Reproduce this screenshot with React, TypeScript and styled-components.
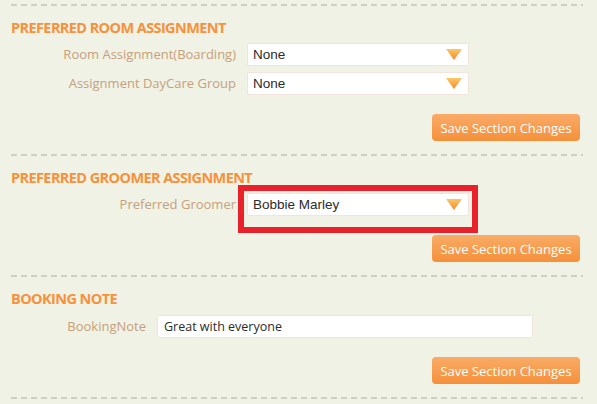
import React from "react";
import styled, { createGlobalStyle } from "styled-components";

const GlobalStyle = createGlobalStyle`
  html, body {
    margin: 0;
    padding: 0;
    background: #eff2e5;
  }
  body {
    font-family: "Open Sans", "Liberation Sans", sans-serif;
  }
`;

interface IRow {
  label: string;
  value: string;
  kind: "select" | "text";
  highlight?: boolean;
}

interface ISection {
  title: string;
  labelWidth: number;
  fieldWidth: number;
  rows: IRow[];
}

const sections: ISection[] = [
  {
    title: "PREFERRED ROOM ASSIGNMENT",
    labelWidth: 225,
    fieldWidth: 222,
    rows: [
      { label: "Room Assignment(Boarding)", value: "None", kind: "select" },
      { label: "Assignment DayCare Group", value: "None", kind: "select" },
    ],
  },
  {
    title: "PREFERRED GROOMER ASSIGNMENT",
    labelWidth: 225,
    fieldWidth: 222,
    rows: [
      {
        label: "Preferred Groomer",
        value: "Bobbie Marley",
        kind: "select",
        highlight: true,
      },
    ],
  },
  {
    title: "BOOKING NOTE",
    labelWidth: 135,
    fieldWidth: 376,
    rows: [{ label: "BookingNote", value: "Great with everyone", kind: "text" }],
  },
];

function Arrow() {
  return (
    <svg width="16" height="11" viewBox="0 0 16 11">
      <defs>
        <linearGradient id="arrowFill" x1="0" y1="0" x2="0" y2="1">
          <stop offset="0" stopColor="#fdc766" />
          <stop offset="1" stopColor="#f48a2c" />
        </linearGradient>
      </defs>
      <polygon points="0,0 16,0 8,11" fill="url(#arrowFill)" />
    </svg>
  );
}

export default function App() {
  return (
    <>
      <GlobalStyle />
      <Page>
        <Divider />
        {sections.map((section) => (
          <React.Fragment key={section.title}>
            <Section>
              <Title>{section.title}</Title>
              <Rows>
                {section.rows.map((row) => (
                  <Row
                    key={row.label}
                    $labelWidth={section.labelWidth}
                    $fieldWidth={section.fieldWidth}
                  >
                    <Label>{row.label}</Label>
                    <FieldWrap>
                      {row.kind === "select" ? (
                        <SelectBox>
                          <span>{row.value}</span>
                          <Arrow />
                        </SelectBox>
                      ) : (
                        <TextInput defaultValue={row.value} />
                      )}
                      {row.highlight && <Highlight />}
                    </FieldWrap>
                  </Row>
                ))}
              </Rows>
              <ButtonBar>
                <SaveButton>Save Section Changes</SaveButton>
              </ButtonBar>
            </Section>
            <Divider />
          </React.Fragment>
        ))}
      </Page>
    </>
  );
}

const Page = styled.div`
  width: 572px;
  padding: 4px 0 0 11px;
`;

const Divider = styled.div`
  height: 2px;
  background: repeating-linear-gradient(
    to right,
    #cfcfc6 0,
    #cfcfc6 6px,
    transparent 6px,
    transparent 10px
  );
`;

const Section = styled.div`
  padding: 12px 0 13px;
`;

const Title = styled.div`
  font-family: "Open Sans", "Liberation Sans", sans-serif;
  font-size: 14.5px;
  font-weight: 700;
  letter-spacing: -0.6px;
  line-height: 20px;
  color: #f7913c;
  margin-bottom: 5px;
`;

const Rows = styled.div`
  display: flex;
  flex-direction: column;
  gap: 6px;
`;

const Row = styled.div<{ $labelWidth: number; $fieldWidth: number }>`
  display: grid;
  grid-template-columns: ${(p) => p.$labelWidth}px ${(p) => p.$fieldWidth}px;
  column-gap: 11px;
  align-items: center;
`;

const Label = styled.div`
  text-align: right;
  font-size: 13px;
  color: #c8a07c;
  line-height: 23px;
`;

const FieldWrap = styled.div`
  position: relative;
`;

const SelectBox = styled.div`
  box-sizing: border-box;
  height: 23px;
  display: flex;
  align-items: center;
  justify-content: space-between;
  padding: 0 6px 0 5px;
  background: #fff;
  border: 1px solid #f2e4da;
  border-radius: 2px;
  font-family: "Liberation Sans", Arial, sans-serif;
  font-size: 13.5px;
  color: #2b2b2b;
`;

const TextInput = styled.input`
  box-sizing: border-box;
  width: 100%;
  height: 23px;
  padding: 0 6px;
  background: #fff;
  border: 1px solid #f2e4da;
  border-radius: 2px;
  font-family: "Open Sans", "Liberation Sans", sans-serif;
  font-size: 12.5px;
  color: #2b2b2b;
  outline: none;
`;

const Highlight = styled.div`
  position: absolute;
  top: -8px;
  left: -9px;
  right: -9px;
  bottom: -17px;
  border: 6px solid #e8212b;
  pointer-events: none;
`;

const ButtonBar = styled.div`
  display: flex;
  justify-content: flex-end;
  padding-right: 3px;
  margin-top: 19px;
`;

const SaveButton = styled.button`
  width: 148px;
  height: 27px;
  border: none;
  border-radius: 4px;
  background: linear-gradient(to bottom, #f9ab67, #f5903a);
  color: #fff;
  font-family: "Open Sans", "Liberation Sans", sans-serif;
  font-size: 13px;
  padding: 0;
  cursor: pointer;
`;
